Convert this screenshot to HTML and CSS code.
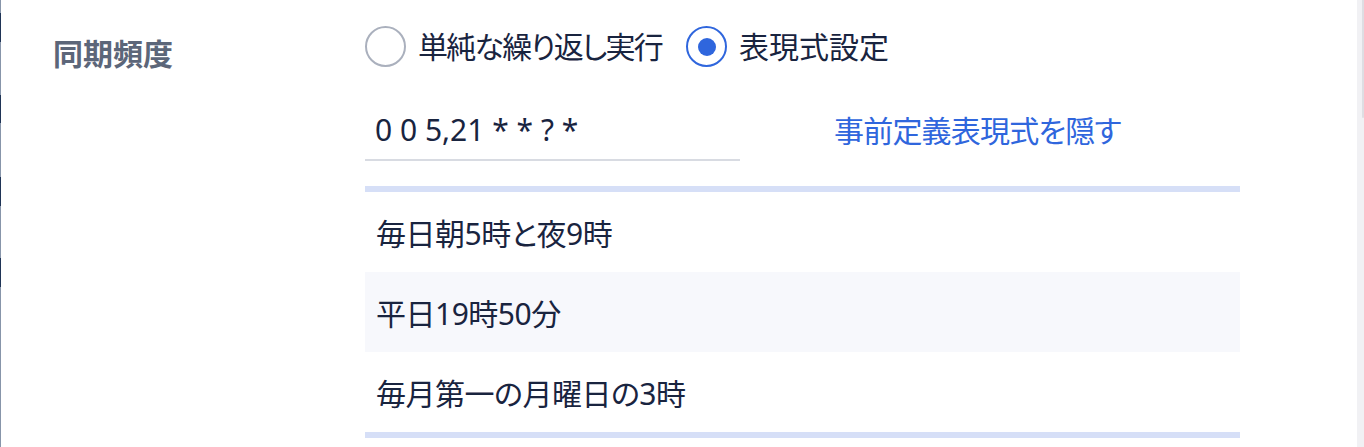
FILE: index.html
```html
<!DOCTYPE html>
<html lang="ja">
<head>
<meta charset="utf-8">
<title>同期頻度</title>
<link rel="stylesheet" href="styles.css">
</head>
<body>
<div class="page">
  <div class="edge"></div>
  <main class="main">
    <div class="field">
      <div class="label-col"><span class="label">同期頻度</span></div>
      <div class="content">
        <div class="radios">
          <label class="radio"><span class="circle"></span><span class="radio-text tight">単純な繰り返し実行</span></label>
          <label class="radio checked"><span class="circle"><span class="inner"></span></span><span class="radio-text">表現式設定</span></label>
        </div>
        <div class="expr-row">
          <div class="expr-input">0 0 5,21 * * ? *</div>
          <a class="link">事前定義表現式を隠す</a>
        </div>
        <div class="presets">
          <div class="preset">毎日朝5時と夜9時</div>
          <div class="preset alt">平日19時50分</div>
          <div class="preset">毎月第一の月曜日の3時</div>
        </div>
      </div>
    </div>
  </main>
  <div class="scrollbar"><div class="thumb"></div></div>
</div>
</body>
</html>
```

FILE: styles.css
```css
html, body {
  margin: 0;
  padding: 0;
  background: #ffffff;
}
body {
  font-family: "Noto Sans", "Noto Sans CJK JP", sans-serif;
  font-feature-settings: "palt";
  color: #19243f;
  height: 447px;
  overflow: hidden;
}
.page {
  display: flex;
  height: 447px;
}
.edge {
  width: 1px;
  flex: none;
  background: linear-gradient(to bottom,
    #8795aa 0px, #8795aa 13px,
    #1f3456 13px, #1f3456 42px,
    #8795aa 42px, #8795aa 95px,
    #1f3456 95px, #1f3456 123px,
    #8795aa 123px, #8795aa 177px,
    #1f3456 177px, #1f3456 206px,
    #8795aa 206px, #8795aa 258px,
    #1f3456 258px, #1f3456 287px,
    #8795aa 287px, #8795aa 447px);
}
.main {
  flex: 1;
  min-width: 0;
}
.scrollbar {
  width: 7px;
  flex: none;
  background: #f1f1f4;
  display: flex;
  justify-content: flex-end;
  align-items: flex-start;
}
.thumb {
  width: 2px;
  height: 118px;
  background: #dedee3;
  border-radius: 0 0 1px 1px;
}
.field {
  display: flex;
  padding-top: 26px;
}
.label-col {
  width: 312px;
  padding-left: 52px;
  flex: none;
}
.label {
  display: block;
  font-size: 30px;
  font-weight: 700;
  color: #5c6679;
  line-height: 42px;
  margin-top: 7px;
}
.content {
  width: 875px;
  flex: none;
}
.radios {
  display: flex;
  align-items: center;
  height: 41px;
}
.radio {
  display: flex;
  align-items: center;
  font-size: 30px;
  line-height: 41px;
}
.radio + .radio {
  margin-left: 24px;
}
.circle {
  width: 41px;
  height: 41px;
  box-sizing: border-box;
  border: 2px solid #aab0bd;
  border-radius: 50%;
  display: flex;
  align-items: center;
  justify-content: center;
  flex: none;
}
.radio.checked .circle {
  border-color: #2f66dd;
}
.inner {
  width: 18px;
  height: 18px;
  border-radius: 50%;
  background: #2f66dd;
}
.radio-text {
  margin-left: 12px;
}
.radio-text.tight {
  letter-spacing: -1.75px;
}
.expr-row {
  display: flex;
  align-items: center;
  margin-top: 33px;
}
.expr-input {
  width: 375px;
  height: 61px;
  box-sizing: border-box;
  border-bottom: 2px solid #d8dbe2;
  font-size: 30px;
  line-height: 59px;
  padding-left: 10px;
}
.link {
  margin-left: 94px;
  font-size: 30px;
  color: #2f66dd;
  line-height: 42px;
  letter-spacing: -0.8px;
  cursor: pointer;
}
.presets {
  margin-top: 25px;
  border-top: 6px solid #d6dff7;
  border-bottom: 6px solid #d6dff7;
}
.preset {
  height: 80px;
  display: flex;
  align-items: center;
  padding-left: 11px;
  font-size: 30px;
  letter-spacing: -0.5px;
}
.preset.alt {
  background: #f7f8fc;
}
```
